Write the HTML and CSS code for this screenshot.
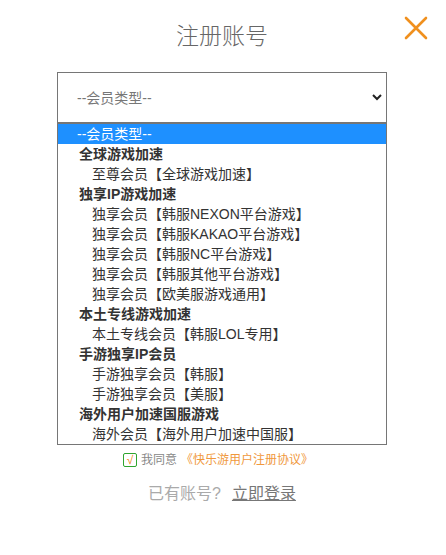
FILE: index.html
```html
<!DOCTYPE html>
<html lang="zh-CN">
<head>
<meta charset="utf-8">
<meta name="viewport" content="width=device-width, initial-scale=1">
<title>注册账号</title>
<link rel="stylesheet" href="styles.css">
</head>
<body>
<main class="dialog">
  <button class="close" type="button" aria-label="关闭">
    <svg viewBox="0 0 24 24" width="24" height="24" aria-hidden="true"><path d="M2 2 22 22M22 2 2 22"/></svg>
  </button>
  <h1 class="title">注册账号</h1>
  <form class="form">
    <div class="field">
      <select class="select" aria-label="会员类型">
        <option>--会员类型--</option>
      </select>
      <svg class="arrow" viewBox="0 0 10 8" width="10" height="8" aria-hidden="true"><path d="M1 1 5 5 9 1"/></svg>
    </div>
    <ul class="menu" role="listbox" aria-label="会员类型">
      <li class="placeholder" role="option" aria-selected="true">--会员类型--</li>
      <li class="group">全球游戏加速</li>
      <li class="option" role="option">至尊会员【全球游戏加速】</li>
      <li class="group">独享IP游戏加速</li>
      <li class="option" role="option">独享会员【韩服NEXON平台游戏】</li>
      <li class="option" role="option">独享会员【韩服KAKAO平台游戏】</li>
      <li class="option" role="option">独享会员【韩服NC平台游戏】</li>
      <li class="option" role="option">独享会员【韩服其他平台游戏】</li>
      <li class="option" role="option">独享会员【欧美服游戏通用】</li>
      <li class="group">本土专线游戏加速</li>
      <li class="option" role="option">本土专线会员【韩服LOL专用】</li>
      <li class="group">手游独享IP会员</li>
      <li class="option" role="option">手游独享会员【韩服】</li>
      <li class="option" role="option">手游独享会员【美服】</li>
      <li class="group">海外用户加速国服游戏</li>
      <li class="option" role="option">海外会员【海外用户加速中国服】</li>
    </ul>
    <div class="agree">
      <input class="check" type="checkbox" id="agree" checked>
      <label for="agree">我同意</label>
      <a class="terms" href="#">《快乐游用户注册协议》</a>
    </div>
    <p class="login"><span>已有账号?</span><a href="#">立即登录</a></p>
  </form>
</main>
</body>
</html>
```
FILE: styles.css
```css
* {
  box-sizing: border-box;
}

body {
  margin: 0;
  background: #fff;
  color: #333;
  font: 14px/20px "Liberation Sans", "Noto Sans CJK SC", sans-serif;
}

.dialog {
  position: relative;
  padding: 20px 59px 40px 57px;
}

.close {
  position: absolute;
  top: 16px;
  right: 18px;
  padding: 0;
  border: 0;
  background: none;
  line-height: 0;
  cursor: pointer;
}

.close path {
  fill: none;
  stroke: #f0901e;
  stroke-width: 2.6;
  stroke-linecap: round;
}

.title {
  margin: 0 0 20px;
  color: #666;
  font-size: 23px;
  font-weight: 300;
  line-height: 32px;
  text-align: center;
}

.field {
  position: relative;
}

.select {
  display: block;
  width: 100%;
  height: 51px;
  padding: 0 19px;
  border: 1px solid #767676;
  border-radius: 0;
  appearance: none;
  background: #fff;
  color: #777;
  font: inherit;
}

.arrow {
  position: absolute;
  top: 22px;
  right: 5px;
  pointer-events: none;
}

.arrow path {
  fill: none;
  stroke: #222;
  stroke-width: 2;
}

.menu {
  margin: 0;
  padding: 0;
  border: 1px solid #767676;
  list-style: none;
}

.menu li {
  height: 20px;
  white-space: nowrap;
}

.menu .placeholder {
  padding-left: 19px;
  background: #1e90ff;
  color: #fff;
}

.menu .group {
  padding-left: 21px;
  font-weight: 700;
}

.menu .option {
  padding-left: 34px;
}

.agree {
  display: flex;
  align-items: center;
  justify-content: center;
  gap: 4px;
  margin-top: 5px;
  padding-right: 8px;
  color: #888;
  font-size: 12px;
}

.check {
  display: grid;
  place-items: center;
  width: 14px;
  height: 14px;
  margin: 0;
  border: 1px solid #2fa52f;
  border-radius: 2px;
  appearance: none;
}

.check:checked::before {
  content: "√";
  color: #f08a24;
  font: 12px/12px "Liberation Sans", sans-serif;
}

.terms {
  color: #f0983c;
  text-decoration: none;
}

.login {
  display: flex;
  justify-content: center;
  gap: 11px;
  margin: 12px 0 0;
  color: #aaa;
  font-size: 16px;
  line-height: 24px;
}

.login a {
  color: #777;
}
```
